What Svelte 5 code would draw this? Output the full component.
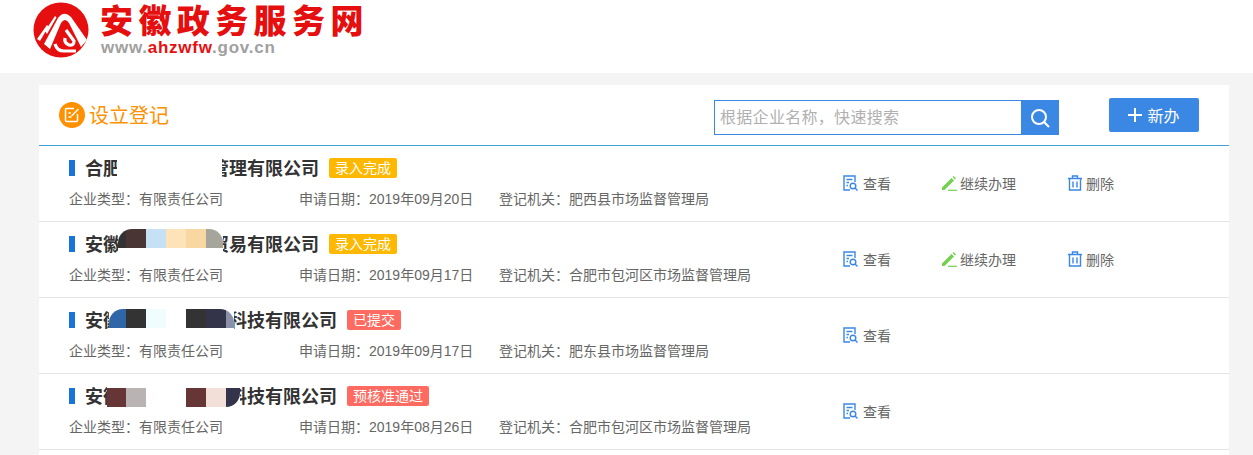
<script>
	const rows = [
		{
			name: '合肥市某某企业管理有限公司',
			tag: '录入完成',
			tagKind: 'amber',
			date: '2019年09月20日',
			org: '肥西县市场监督管理局',
			full: true,
			patch: { left: 48, inset: 0, radius: '0', blocks: [['#ffffff', 105]] }
		},
		{
			name: '安徽某某某某商贸易有限公司',
			tag: '录入完成',
			tagKind: 'amber',
			date: '2019年09月17日',
			org: '合肥市包河区市场监督管理局',
			full: true,
			patch: {
				left: 49, inset: 1, radius: '14px 14px 0 0',
				blocks: [['#333333', 8], ['#4a3535', 20], ['#c6e1f6', 20], ['#fee3b9', 20], ['#f8d7a2', 20], ['#a5a59b', 17]]
			}
		},
		{
			name: '安徽某某某某某某科技有限公司',
			tag: '已提交',
			tagKind: 'red',
			date: '2019年09月17日',
			org: '肥东县市场监督管理局',
			full: false,
			patch: {
				left: 40, inset: 5, radius: '14px 14px 0 0',
				blocks: [['#2f66a8', 17], ['#333333', 20], ['#f0fdff', 20], ['#ffffff', 20], ['#333333', 20], ['#33334a', 20], ['#8a90a8', 8]]
			}
		},
		{
			name: '安徽某某某某某某科技有限公司',
			tag: '预核准通过',
			tagKind: 'red',
			date: '2019年08月26日',
			org: '合肥市包河区市场监督管理局',
			full: false,
			patch: {
				left: 38, inset: 8, radius: '0 0 14px 0',
				blocks: [['#663535', 19], ['#b9b3b3', 20], ['#ffffff', 40], ['#663535', 20], ['#f2e0d8', 20], ['#33334a', 14]]
			}
		}
	];
</script>

<header class="site-head">
	<svg class="logo" viewBox="0 0 56 56" width="56" height="56" aria-hidden="true">
		<circle cx="28" cy="28" r="27.500" fill="#e60f0f" />
		<path d="M11 42 L25 16 Q31 8 38 15 L54 38 L48 45 L36 21 Q32 15 28 21 L17 47 Z" fill="#fff" />
		<path d="M4 37 L14 23 L15.500 24.500 L7 39Z M12 29 L22 14 L23.500 15.500 L14 32Z" fill="#fff" />
		<path d="M33 28 L41 39 Q41 44 36 43 Q31 41 32 36 M22 42 Q24 49 31 49 L43 49" fill="none" stroke="#fff" stroke-width="3.200" />
	</svg>
	<div class="brand">
		<div class="brand-name">安徽政务服务网</div>
		<div class="brand-url">www.<span>ahzwfw</span>.gov.cn</div>
	</div>
</header>

<main class="card">
	<div class="card-head">
		<span class="title-icon">
			<svg viewBox="0 0 16 16" width="16" height="16" fill="none" stroke="#fff" stroke-width="1.500">
				<path d="M10 1.500H2.500a1 1 0 0 0-1 1v11a1 1 0 0 0 1 1h10a1 1 0 0 0 1-1V7" />
				<path d="M4.500 6h2.500M4.500 10h3" />
				<path d="M7.500 9l7-7" />
			</svg>
		</span>
		<h1>设立登记</h1>
		<div class="search">
			<input type="text" placeholder="根据企业名称，快速搜索" />
			<button class="search-btn" aria-label="搜索">
				<svg viewBox="0 0 20 20" width="20" height="20" fill="none" stroke="#fff" stroke-width="2">
					<circle cx="9" cy="9" r="7" />
					<path d="M14 14l5 5" />
				</svg>
			</button>
		</div>
		<button class="new-btn">
			<svg viewBox="0 0 14 14" width="14" height="14" stroke="#fff" stroke-width="2"><path d="M7 0v14M0 7h14" /></svg>
			新办
		</button>
	</div>

	{#each rows as row}
		<section class="row">
			<div class="info">
				<div class="name-line">
					<i class="bar"></i>
					<span class="name">{row.name}</span>
					<span class="tag {row.tagKind}">{row.tag}</span>
				</div>
				<div class="meta">
					<span class="type">企业类型：有限责任公司</span>
					<span class="date">申请日期：{row.date}</span>
					<span>登记机关：{row.org}</span>
				</div>
				<div class="patch" style="left:{row.patch.left}px">
					<div class="blocks" style="margin-top:{row.patch.inset}px;border-radius:{row.patch.radius}">
						{#each row.patch.blocks as b}
							<b style="background:{b[0]};width:{b[1]}px"></b>
						{/each}
					</div>
				</div>
			</div>
			<div class="actions">
				<a class="act view">
					<svg viewBox="0 0 16 16" width="16" height="16" fill="none" stroke="#3b87e4" stroke-width="1.400">
						<path d="M7 15H1V1h11v6" />
						<path d="M3.500 4.500h6M3.500 7.500h2.500M3.500 10.500h1.500" />
						<circle cx="10" cy="11" r="2.800" />
						<path d="M12 13l2.500 2.500" />
					</svg>
					查看
				</a>
				{#if row.full}
					<a class="act edit">
						<svg viewBox="0 0 16 16" width="16" height="16">
							<path d="M1 12.500L10.500 3l2.500 2.500L3.500 15H1z M11.500 2l1-1 2.500 2.500-1 1z" fill="#74d04e" />
							<path d="M7 15.300h9" stroke="#74d04e" stroke-width="1.200" />
						</svg>
						继续办理
					</a>
					<a class="act del">
						<svg viewBox="0 0 16 16" width="16" height="16" fill="none" stroke="#3b87e4" stroke-width="1.400">
							<path d="M1 3.500h14M5.500 3.500V1h5v2.500" />
							<path d="M2.500 3.500V15h11V3.500" />
							<path d="M6 6.500v6M10 6.500v6" />
						</svg>
						删除
					</a>
				{/if}
			</div>
		</section>
	{/each}
</main>

<style>
	:global(body) {
		margin: 0;
		background: #f4f4f4;
		font-family: 'Liberation Sans', 'Noto Sans CJK SC', sans-serif;
		height: 455px;
		overflow: hidden;
	}

	.site-head {
		display: flex;
		align-items: flex-start;
		gap: 11px;
		height: 73px;
		padding: 2px 0 0 33px;
		box-sizing: border-box;
		background: #fff;
	}

	.brand {
		margin-top: 3px;
	}

	.brand-name {
		font-size: 33px;
		line-height: 33px;
		font-weight: 900;
		letter-spacing: 5.400px;
		color: #e60f0f;
		white-space: nowrap;
	}

	.brand-url {
		padding-left: 1px;
		font-size: 17px;
		line-height: 20px;
		font-weight: 700;
		letter-spacing: 0.750px;
		color: #a0a0a0;
	}

	.brand-url span {
		color: #e60f0f;
	}

	.card {
		margin: 12px 24px 0 39px;
		min-height: 370px;
		background: #fff;
	}

	.card-head {
		display: flex;
		align-items: center;
		height: 60px;
		padding: 0 30px 0 20px;
		border-bottom: 1px solid #3f9fd8;
	}

	.title-icon {
		display: flex;
		align-items: center;
		justify-content: center;
		width: 26px;
		height: 26px;
		border-radius: 50%;
		background: #ff9000;
	}

	h1 {
		margin: 0 0 2px 4px;
		font-size: 20px;
		font-weight: 400;
		color: #ff9000;
	}

	.search {
		display: flex;
		margin: 5px 0 0 auto;
		height: 35px;
		width: 345px;
		box-sizing: border-box;
		border: 1px solid #3b87e4;
	}

	input {
		flex: 1;
		min-width: 0;
		padding: 0 5px;
		border: 0;
		outline: 0;
		font: inherit;
		font-size: 16px;
		letter-spacing: 0.300px;
	}

	input::placeholder {
		color: #b0b0b0;
		opacity: 1;
	}

	.search-btn {
		display: flex;
		align-items: center;
		justify-content: center;
		width: 37px;
		padding: 0;
		border: 0;
		background: #3b87e4;
	}

	.new-btn {
		display: flex;
		align-items: center;
		justify-content: center;
		gap: 5px;
		width: 90px;
		height: 34px;
		margin-left: 50px;
		padding: 0;
		border: 0;
		border-radius: 2px;
		background: #3b87e4;
		color: #fff;
		font: inherit;
		font-size: 16px;
	}

	.row {
		display: flex;
		height: 76px;
		box-sizing: border-box;
		padding-left: 30px;
		border-bottom: 1px solid #e4e4e4;
	}

	.info {
		position: relative;
		width: 774px;
	}

	.name-line {
		display: flex;
		align-items: center;
		height: 20px;
		margin-top: 12px;
	}

	.bar {
		width: 6px;
		height: 16px;
		margin-right: 10px;
		background: #1a73d9;
	}

	.name {
		position: relative;
		top: -1px;
		font-size: 18px;
		font-weight: 700;
		color: #333;
		white-space: nowrap;
	}

	.tag {
		height: 20px;
		margin-left: 10px;
		padding: 0 6px;
		border-radius: 2px;
		font-size: 14px;
		line-height: 20px;
		color: #fff;
	}

	.amber {
		background: #ffb800;
	}

	.red {
		background: #ff6b60;
	}

	.meta {
		display: flex;
		margin-top: 11px;
		font-size: 14px;
		line-height: 20px;
		color: #666;
	}

	.type {
		width: 230px;
	}

	.date {
		width: 200px;
	}

	.patch {
		position: absolute;
		top: 6px;
		height: 27px;
		background: #fff;
	}

	.blocks {
		display: flex;
		height: 19px;
		overflow: hidden;
	}

	.actions {
		display: flex;
		align-items: center;
		height: 73px;
		font-size: 14px;
		color: #666;
	}

	.act {
		display: flex;
		align-items: center;
		gap: 3px;
	}

	.view {
		width: 98px;
		gap: 4px;
	}

	.edit {
		width: 126px;
	}
</style>
